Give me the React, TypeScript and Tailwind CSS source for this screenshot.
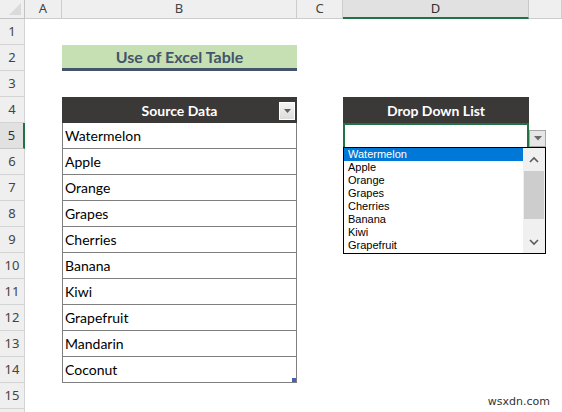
const fruits = ['Watermelon', 'Apple', 'Orange', 'Grapes', 'Cherries', 'Banana', 'Kiwi', 'Grapefruit', 'Mandarin', 'Coconut']
const listItems = fruits.slice(0, 8)
const columns = ['A', 'B', 'C', 'D', '']
const rowNumbers = Array.from({ length: 16 }, (_, i) => i + 1)

function DownArrow({ size = 7, color = '#5f5f5f' }: { size?: number; color?: string }) {
  return (
    <svg width={size} height={size / 2 + 1} viewBox="0 0 8 5">
      <path d="M0 0 L8 0 L4 4.5 Z" fill={color} />
    </svg>
  )
}

function Chevron({ up }: { up?: boolean }) {
  return (
    <svg width="10" height="7" viewBox="0 0 10 7">
      <path d={up ? 'M1 6 L5 2 L9 6' : 'M1 1 L5 5 L9 1'} fill="none" stroke="#5a5a5a" strokeWidth="1.6" />
    </svg>
  )
}

function BCell({ row }: { row: number }) {
  if (row === 2) {
    return (
      <div className="flex items-center justify-center bg-[#c6e0b4] border-b-[3px] border-[#44546a] text-[16px] font-bold text-[#44546a]">
        Use of Excel Table
      </div>
    )
  }
  if (row === 4) {
    return (
      <div className="relative flex items-center justify-center bg-[#3b3838] text-[14px] font-bold text-white">
        Source Data
        <div className="absolute right-[2px] top-[5px] flex h-[18px] w-[16px] items-center justify-center border border-white bg-gradient-to-b from-[#f4f4f4] to-[#dcdcdc]">
          <DownArrow />
        </div>
      </div>
    )
  }
  if (row >= 5 && row <= 14) {
    const last = row === 14
    return (
      <div className="relative flex items-center border-x border-b border-[#7f7f7f] pl-[2px] text-[14px] text-black">
        {fruits[row - 5]}
        {last && <div className="absolute bottom-0 right-0 h-[4px] w-[4px] bg-[#4b5fb3]" />}
      </div>
    )
  }
  return <div />
}

function DCell({ row }: { row: number }) {
  if (row === 4) {
    return (
      <div className="flex items-center justify-center bg-[#3b3838] text-[14px] font-bold text-white">
        Drop Down List
      </div>
    )
  }
  if (row === 5) {
    return <div className="border-2 border-[#217346] bg-white" />
  }
  return <div />
}

export default function App() {
  return (
    <div className="relative h-[412px] w-[562px] overflow-hidden bg-white font-['Lato',sans-serif]">
      <div className="grid grid-cols-[25px_37px_235px_46px_186px_33px] grid-rows-[19px_repeat(16,26px)]">
        {/* corner */}
        <div className="relative border-b border-r border-[#c4c4c4] bg-[#efefef]">
          <svg className="absolute bottom-[3px] right-[3px]" width="12" height="12" viewBox="0 0 12 12">
            <path d="M12 0 L12 12 L0 12 Z" fill="#dadada" />
          </svg>
        </div>
        {columns.map((c) => (
          <div
            key={c || 'E'}
            className={
              c === 'D'
                ? "flex items-center justify-center border-b-2 border-r border-b-[#217346] border-r-[#c8c8c8] bg-[#e1e1e1] font-['Noto_Sans',sans-serif] text-[13px] text-[#2f2f2f]"
                : "flex items-center justify-center border-b border-r border-[#cdcdcd] bg-[#efefef] font-['Noto_Sans',sans-serif] text-[13px] text-[#444]"
            }
          >
            {c}
          </div>
        ))}
        {rowNumbers.map((r) => [
          <div
            key={`h${r}`}
            className={
              r === 5
                ? "flex items-center justify-center border-b border-r-2 border-b-[#c8c8c8] border-r-[#217346] bg-[#e1e1e1] font-['Noto_Sans',sans-serif] text-[13px] text-[#2f2f2f]"
                : "flex items-center justify-center border-b border-r border-[#d4d4d4] bg-[#efefef] font-['Noto_Sans',sans-serif] text-[13px] text-[#444]"
            }
          >
            {r < 16 ? r : ''}
          </div>,
          <div key={`a${r}`} />,
          <BCell key={`b${r}`} row={r} />,
          <div key={`c${r}`} />,
          <DCell key={`d${r}`} row={r} />,
          <div key={`e${r}`} />,
        ])}
      </div>

      {/* data validation dropdown button */}
      <div className="absolute left-[529px] top-[130px] flex h-[17px] w-[17px] items-center justify-center border border-[#a6a6a6] bg-[#e6e6e6]">
        <DownArrow size={8} color="#6a6a6a" />
      </div>

      {/* open list */}
      <div className="absolute left-[343px] top-[147px] flex h-[107px] w-[203px] border border-black bg-white font-['Liberation_Sans',sans-serif] text-[11px] text-black">
        <div className="flex flex-1 flex-col">
          {listItems.map((f, i) => (
            <div key={f} className={i === 0 ? 'h-[13px] bg-[#0078d7] pl-[4px] leading-[13px] text-white' : 'h-[13px] pl-[4px] leading-[13px]'}>
              {f}
            </div>
          ))}
        </div>
        <div className="flex w-[22px] flex-col bg-[#f0f0f0]">
          <div className="flex h-[23px] items-center justify-center">
            <Chevron up />
          </div>
          <div className="mx-[1px] h-[48px] bg-[#cdcdcd]" />
          <div className="flex-1" />
          <div className="flex h-[22px] items-center justify-center">
            <Chevron />
          </div>
        </div>
      </div>

      <div className="absolute bottom-[2px] right-[12px] font-['DejaVu_Sans',sans-serif] text-[11px] text-[#333]">wsxdn.com</div>
    </div>
  )
}
